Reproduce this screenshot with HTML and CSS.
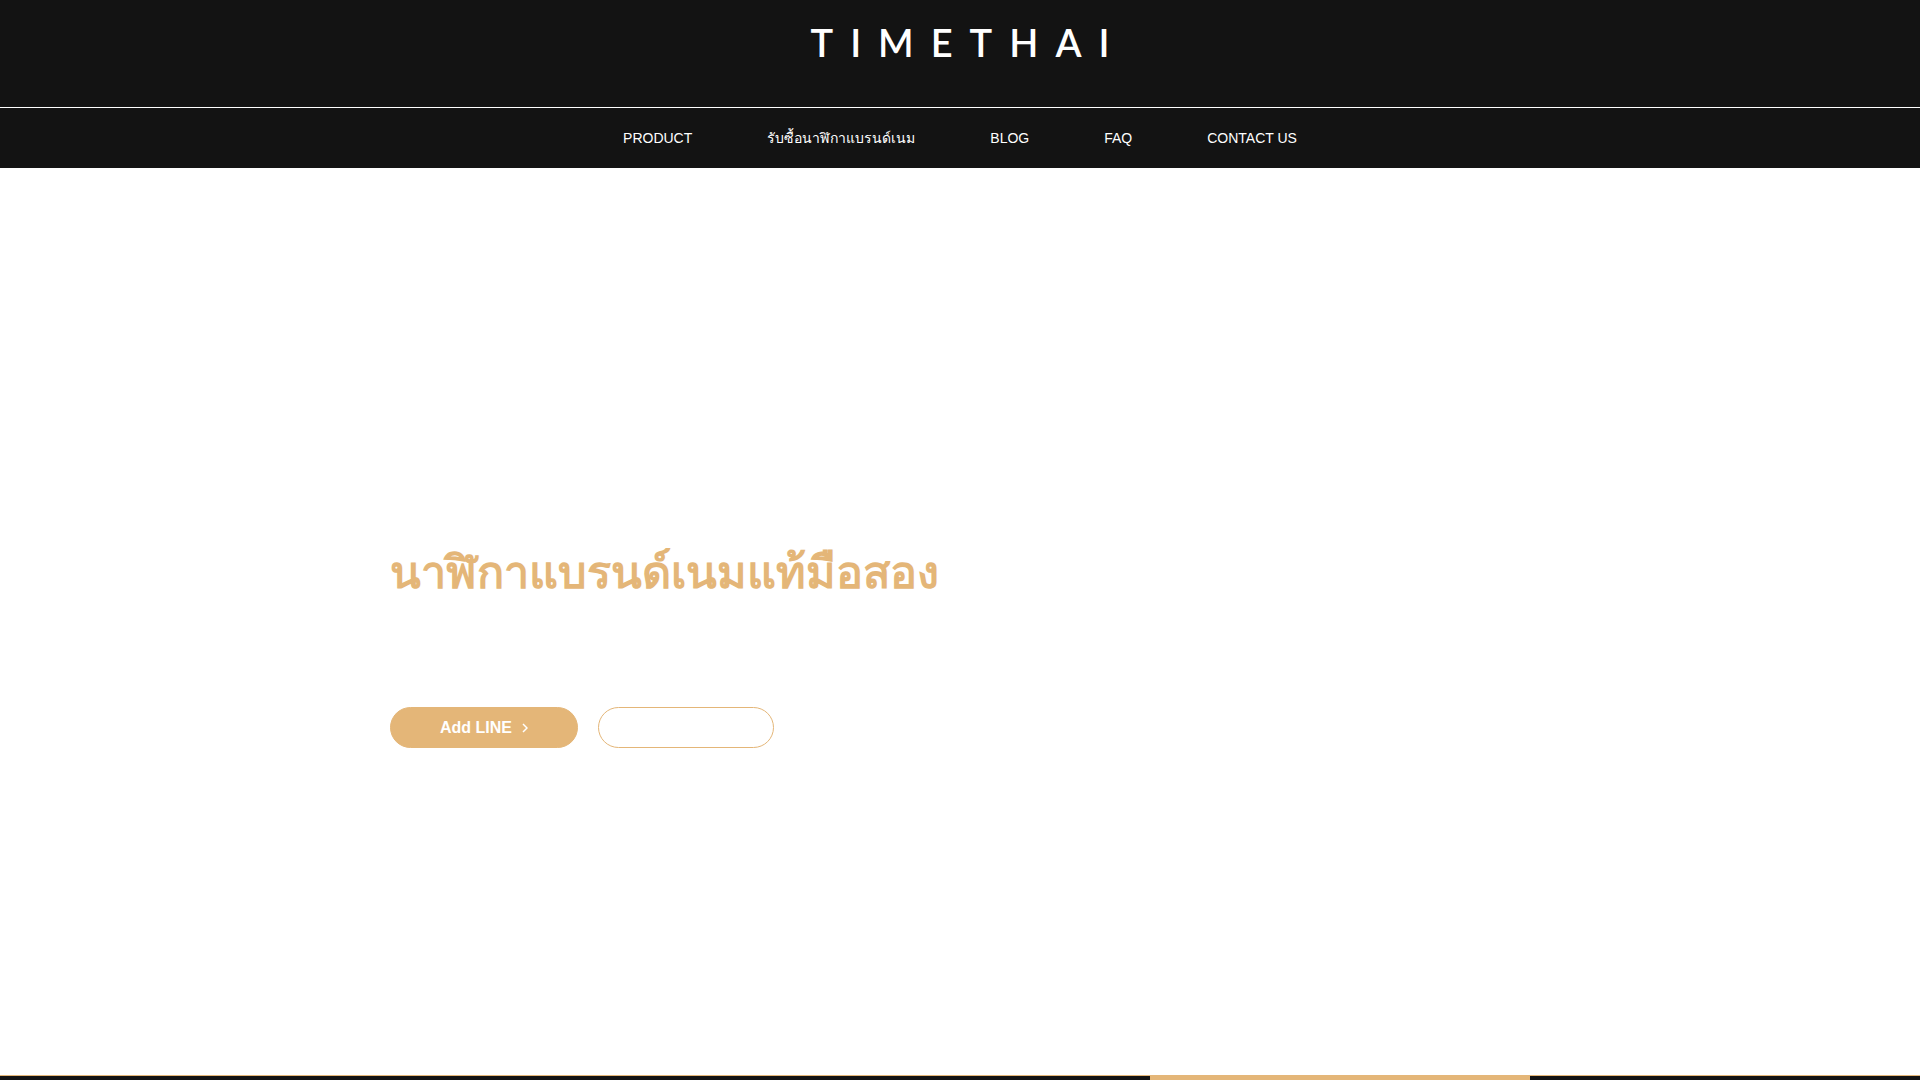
FILE: index.html
```
<!DOCTYPE html>
<html lang="th">

<head>
    <meta charset="utf-8">
    <meta name="viewport" content="width=device-width, initial-scale=1">
    <title>TIMETHAI</title>
    <link rel="icon" href="data:,">
    <link rel="stylesheet" href="styles.css">
</head>

<body>
    <header class="header">
        <div class="brand">
            <a class="logo" href="#">TIMETHAI</a>
        </div>
        <nav class="menu">
            <a href="#">PRODUCT</a>
            <a href="#">รับซื้อนาฬิกาแบรนด์เนม</a>
            <a href="#">BLOG</a>
            <a href="#">FAQ</a>
            <a href="#">CONTACT US</a>
        </nav>
    </header>

    <main class="hero">
        <div class="container">
            <h1>นาฬิกาแบรนด์เนมแท้มือสอง</h1>
            <div class="actions">
                <a class="button button-line" href="#">
                    Add LINE
                    <svg class="arrow" viewBox="0 0 6 10" aria-hidden="true">
                        <path d="M1 1l4 4-4 4" />
                    </svg>
                </a>
                <a class="button button-outline" href="#"></a>
            </div>
        </div>
    </main>

    <!-- Top edge of the three column bar -->
    <div class="strip">
        <div class="container columns">
            <div class="highlight"></div>
        </div>
    </div>
</body>

</html>
```

FILE: styles.css
```
* {
    box-sizing: border-box;
}

body {
    margin: 0;
    min-height: 100vh;
    display: flex;
    flex-direction: column;
    background-color: #fff;
    font-family: "Liberation Sans", Arial, sans-serif;
}

a {
    color: #fff;
    text-decoration: none;
}

.container {
    width: 100%;
    max-width: 1140px;
    margin: 0 auto;
}

/* Header */
.header {
    background-color: #131313;
}

.brand {
    display: flex;
    justify-content: center;
    padding: 20px 0 43px;
    border-bottom: 1px solid #fff;
}

.logo {
    font-family: Lato, sans-serif;
    font-size: 38px;
    font-weight: 600;
    line-height: 44px;
    letter-spacing: 17px;
    margin-right: -17px;
}

.menu {
    display: flex;
    flex-wrap: wrap;
    justify-content: center;
    gap: 0 75px;
    padding: 20px 0;
    font-size: 14px;
    line-height: 20px;
}

/* Hero */
.hero {
    flex: 1;
    display: flex;
    align-items: center;
    padding-top: 38px;
}

h1 {
    margin: 0 0 94px;
    color: #e4b678;
    font-size: 45px;
    font-weight: bold;
    line-height: 80px;
}

.actions {
    display: flex;
    gap: 20px;
}

.button {
    display: flex;
    align-items: center;
    justify-content: center;
    gap: 10px;
    height: 41px;
    border: 1px solid #e4b678;
    border-radius: 21px;
    font-size: 16px;
    font-weight: bold;
}

.button-line {
    width: 188px;
    background-color: #e4b678;
}

.button-outline {
    width: 176px;
}

.arrow {
    width: 6px;
    height: 10px;
    fill: none;
    stroke: #fff;
    stroke-width: 1.5;
}

/* Bottom bar */
.strip {
    background-color: #131313;
    border-top: 1px solid #e4b678;
}

.columns {
    display: grid;
    grid-template-columns: repeat(3, 1fr);
}

.highlight {
    grid-column: 3;
    height: 4px;
    background-color: #e4b678;
}
```
